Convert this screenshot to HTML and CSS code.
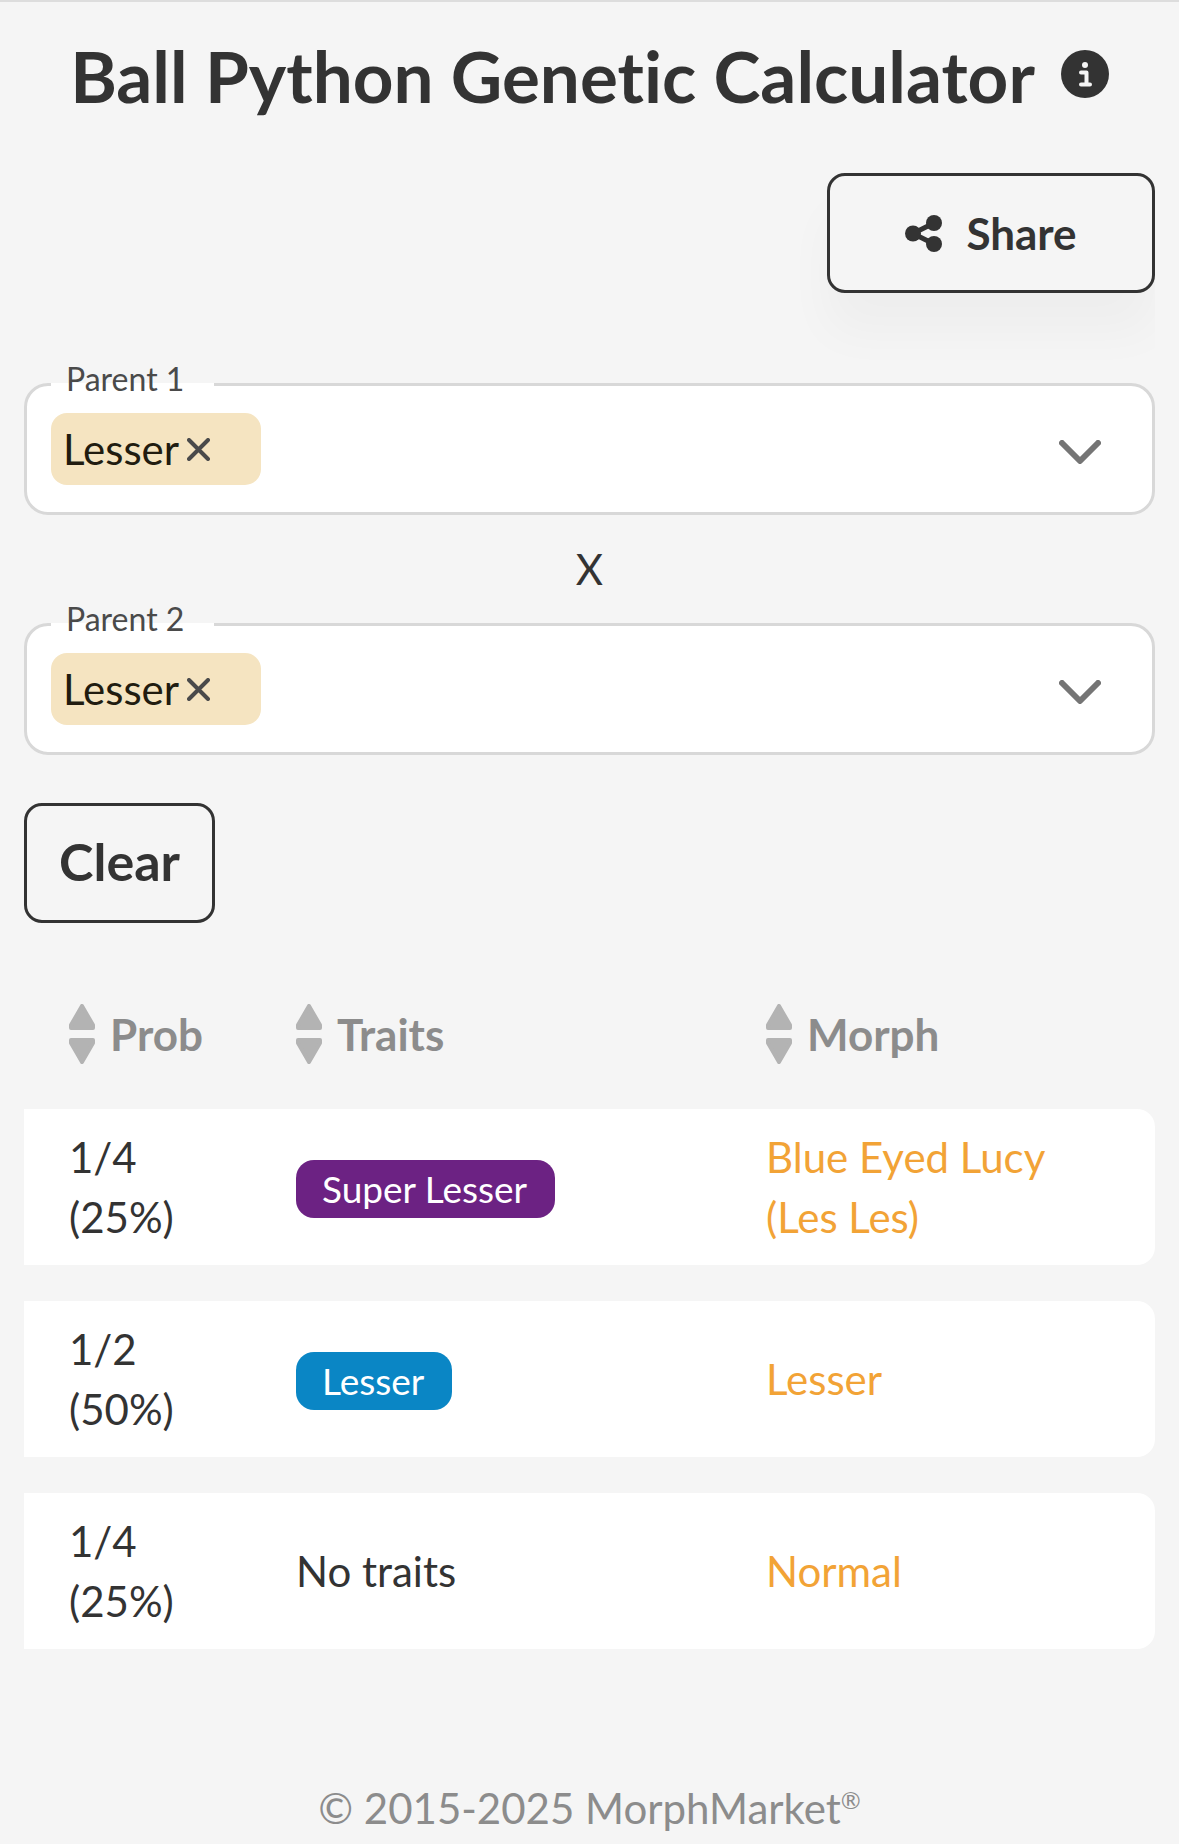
FILE: index.html
```html
<!DOCTYPE html>
<html lang="en">
<head>
<meta charset="utf-8">
<meta name="viewport" content="width=device-width, initial-scale=1">
<title>Ball Python Genetic Calculator</title>
<link rel="stylesheet" href="styles.css">
</head>
<body>
<main class="page">
  <header class="title-bar">
    <h1 class="title">Ball Python Genetic Calculator</h1>
    <button class="icon-button" type="button" aria-label="About this calculator">
      <svg class="info-icon" viewBox="0 0 48 48" aria-hidden="true"><circle cx="24" cy="24" r="24" fill="#333"/><circle cx="24" cy="15" r="3" fill="#f5f5f5"/><path d="M20 22.500h5.500v11M20 34.500h9" fill="none" stroke="#f5f5f5" stroke-width="4" stroke-linecap="round" stroke-linejoin="round"/></svg>
    </button>
  </header>

  <div class="actions">
    <button class="button button-share" type="button">
      <svg class="share-icon" viewBox="0 0 37 37" aria-hidden="true"><path d="M29 8 8 18.500 29 29" fill="none" stroke="#333" stroke-width="5"/><circle cx="8" cy="18.500" r="8" fill="#333"/><circle cx="29" cy="8" r="8" fill="#333"/><circle cx="29" cy="29" r="8" fill="#333"/></svg>
      Share
    </button>
  </div>

  <form class="parents">
    <div class="field">
      <label class="field-label" for="parent1">Parent 1</label>
      <span class="chip">Lesser<button class="icon-button" type="button" aria-label="Remove Lesser"><svg class="remove-icon" viewBox="0 0 23 23" aria-hidden="true"><path d="M2 2l19 19M21 2 2 21"/></svg></button></span>
      <input class="field-input" id="parent1" type="text" autocomplete="off">
      <button class="icon-button field-toggle" type="button" aria-label="Show traits for parent 1"><svg class="chevron-icon" viewBox="0 0 42 24" aria-hidden="true"><path d="M3 3l18 18L39 3"/></svg></button>
    </div>
    <p class="cross">X</p>
    <div class="field">
      <label class="field-label" for="parent2">Parent 2</label>
      <span class="chip">Lesser<button class="icon-button" type="button" aria-label="Remove Lesser"><svg class="remove-icon" viewBox="0 0 23 23" aria-hidden="true"><path d="M2 2l19 19M21 2 2 21"/></svg></button></span>
      <input class="field-input" id="parent2" type="text" autocomplete="off">
      <button class="icon-button field-toggle" type="button" aria-label="Show traits for parent 2"><svg class="chevron-icon" viewBox="0 0 42 24" aria-hidden="true"><path d="M3 3l18 18L39 3"/></svg></button>
    </div>
    <button class="button button-clear" type="reset">Clear</button>
  </form>

  <table class="results">
    <colgroup><col class="col-prob"><col><col class="col-morph"></colgroup>
    <thead>
      <tr>
        <th scope="col"><button class="sort" type="button"><svg class="sort-icon" viewBox="0 0 26 60" aria-hidden="true"><path d="M13 2 24 21v3H2v-3zM13 58 24 39v-3H2v3z"/></svg>Prob</button></th>
        <th scope="col"><button class="sort" type="button"><svg class="sort-icon" viewBox="0 0 26 60" aria-hidden="true"><path d="M13 2 24 21v3H2v-3zM13 58 24 39v-3H2v3z"/></svg>Traits</button></th>
        <th scope="col"><button class="sort" type="button"><svg class="sort-icon" viewBox="0 0 26 60" aria-hidden="true"><path d="M13 2 24 21v3H2v-3zM13 58 24 39v-3H2v3z"/></svg>Morph</button></th>
      </tr>
    </thead>
    <tbody>
      <tr>
        <td>1/4<br>(25%)</td>
        <td><span class="badge badge-super">Super Lesser</span></td>
        <td><a class="morph" href="#blue-eyed-lucy">Blue Eyed Lucy<br>(Les Les)</a></td>
      </tr>
      <tr>
        <td>1/2<br>(50%)</td>
        <td><span class="badge badge-single">Lesser</span></td>
        <td><a class="morph" href="#lesser">Lesser</a></td>
      </tr>
      <tr>
        <td>1/4<br>(25%)</td>
        <td>No traits</td>
        <td><a class="morph" href="#normal">Normal</a></td>
      </tr>
    </tbody>
  </table>

  <footer class="footer">© 2015-2025 MorphMarket<sup class="registered">®</sup></footer>
</main>
</body>
</html>
```
FILE: styles.css
```css
* {
  box-sizing: border-box;
}

body {
  margin: 0;
  border-top: 2px solid #ddd;
  background: #f5f5f5;
  color: #333;
  font: 42px/60px Lato, "Open Sans", sans-serif;
  font-variant-ligatures: none;
}

button,
input {
  font: inherit;
  color: inherit;
}

svg {
  display: block;
  flex: none;
}

.page {
  padding: 0 24px 6px;
}

.title-bar {
  display: flex;
  justify-content: center;
  gap: 26px;
  padding-top: 34px;
}

.title {
  margin: 0;
  font-size: 71px;
  font-weight: 700;
  line-height: 80px;
}

.icon-button {
  display: flex;
  align-items: center;
  padding: 0;
  border: 0;
  background: none;
}

.title-bar .icon-button {
  height: 76px;
}

.info-icon {
  width: 48px;
  height: 48px;
}

.actions {
  display: flex;
  justify-content: flex-end;
  height: 267px;
  padding-top: 57px;
  overflow: hidden;
}

.button {
  display: flex;
  align-items: center;
  justify-content: center;
  height: 120px;
  border: 3px solid #333;
  border-radius: 18px;
  background: none;
  font-weight: 700;
}

.button-share {
  gap: 24px;
  width: 328px;
  font-size: 44px;
  box-shadow: 0 40px 48px rgba(0, 0, 0, 0.03);
}

.share-icon {
  width: 37px;
  height: 37px;
}

.button-clear {
  min-width: 191px;
  margin-top: 48px;
  padding: 0 31px 4px;
  font-size: 52px;
}

.field {
  position: relative;
  display: flex;
  align-items: center;
  height: 132px;
  padding: 0 51px 0 24px;
  border: 3px solid #d8d8d8;
  border-radius: 24px;
  background: #fff;
}

.field-label {
  position: absolute;
  top: -27px;
  left: 24px;
  padding: 0 30px 0 15px;
  background: linear-gradient(#fff, #fff) 0 24px / 100% 3px no-repeat;
  color: #4a4a4a;
  font-size: 32px;
  line-height: 40px;
}

.chip {
  display: flex;
  align-items: center;
  gap: 8px;
  height: 72px;
  padding: 0 51px 0 12px;
  border-radius: 16px;
  background: #f5e4c1;
  color: #211c10;
}

.remove-icon {
  width: 23px;
  height: 23px;
  fill: none;
  stroke: #4a4a4a;
  stroke-width: 4;
  stroke-linecap: round;
}

.field-input {
  flex: 1;
  min-width: 0;
  border: 0;
  background: none;
  outline: none;
}

.field-toggle {
  padding-top: 6px;
}

.chevron-icon {
  width: 42px;
  height: 24px;
  fill: none;
  stroke: #757575;
  stroke-width: 6;
  stroke-linecap: round;
  stroke-linejoin: round;
}

.cross {
  margin: 24px 0;
  text-align: center;
}

.results {
  width: 100%;
  margin-top: 36px;
  border-spacing: 0 36px;
  table-layout: fixed;
}

.col-prob {
  width: 227px;
}

.col-morph {
  width: 434px;
}

.results th {
  height: 78px;
  padding: 0 0 0 45px;
  text-align: left;
}

.sort {
  display: flex;
  align-items: center;
  gap: 15px;
  padding: 0;
  border: 0;
  background: none;
  color: #8c8c8c;
  font-size: 44px;
}

.sort-icon {
  width: 26px;
  height: 60px;
  fill: #b3b3b3;
  stroke: #b3b3b3;
  stroke-width: 4;
  stroke-linejoin: round;
}

.results td {
  height: 156px;
  padding: 18px 0 18px 45px;
  background: #fff;
}

.results td:last-child {
  border-radius: 0 18px 18px 0;
}

.badge {
  display: block;
  width: fit-content;
  margin-top: 4px;
  padding: 0 28px 0 26px;
  border-radius: 18px;
  color: #fff;
  font-size: 37px;
  line-height: 58px;
}

.badge-super {
  background: #6c2283;
}

.badge-single {
  background: #0a86c5;
}

.morph {
  color: #f2a336;
  text-decoration: none;
}

.footer {
  margin-top: 93px;
  color: #8c8c8c;
  text-align: center;
}

.registered {
  font-size: 24px;
  line-height: 0;
}
```
